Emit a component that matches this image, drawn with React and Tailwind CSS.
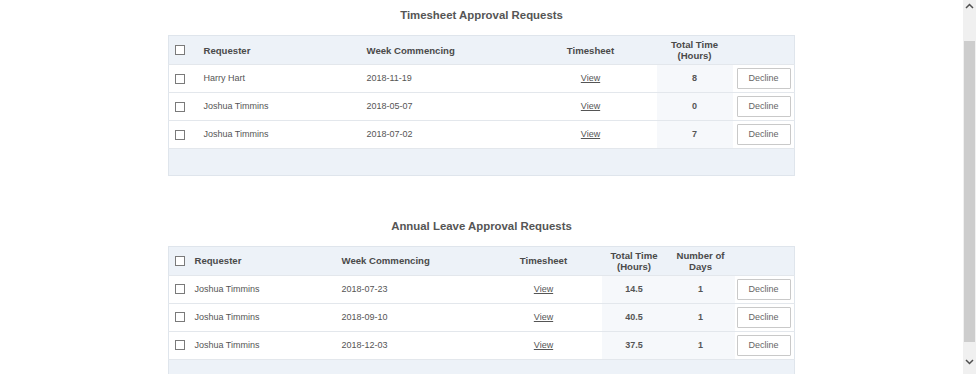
import React from "react";

const TIMESHEETS = [
  { name: "Harry Hart", week: "2018-11-19", hours: "8" },
  { name: "Joshua Timmins", week: "2018-05-07", hours: "0" },
  { name: "Joshua Timmins", week: "2018-07-02", hours: "7" },
];

const LEAVE = [
  { name: "Joshua Timmins", week: "2018-07-23", hours: "14.5", days: "1" },
  { name: "Joshua Timmins", week: "2018-09-10", hours: "40.5", days: "1" },
  { name: "Joshua Timmins", week: "2018-12-03", hours: "37.5", days: "1" },
];

const thCls = "font-bold text-[9.6px] leading-[11px] text-[#4a4a4a] h-[29px] align-middle";
const tdCls = "text-[9px] text-[#555] h-[28px] align-middle border-t border-[#e3e7ec]";

function Box() {
  return <span className="block w-[10px] h-[10px] border border-[#7a7a7a] bg-white" />;
}

function DeclineButton() {
  return (
    <button className="w-[54px] h-[21px] border border-[#c9c9c9] bg-white text-[9px] text-[#666] rounded-[1px]">
      Decline
    </button>
  );
}

function Title({ children }) {
  return (
    <h2 className="text-center font-bold text-[11.4px] text-[#555] leading-none">
      {children}
    </h2>
  );
}

function TimesheetTable() {
  return (
    <table className="table-fixed border-collapse w-[626px] border border-[#dfe5ec]">
      <colgroup>
        <col className="w-[27px]" />
        <col className="w-[163px]" />
        <col className="w-[166px]" />
        <col className="w-[132px]" />
        <col className="w-[76px]" />
        <col className="w-[62px]" />
      </colgroup>
      <thead className="bg-[#edf2f8]">
        <tr>
          <th className={`${thCls} pl-[6px]`}><Box /></th>
          <th className={`${thCls} text-left pl-[8px]`}>Requester</th>
          <th className={`${thCls} text-left pl-[8px]`}>Week Commencing</th>
          <th className={`${thCls} text-center`}>Timesheet</th>
          <th className={`${thCls} text-center`}>Total Time<br />(Hours)</th>
          <th className={thCls}></th>
        </tr>
      </thead>
      <tbody>
        {TIMESHEETS.map((r, i) => (
          <tr key={i} className="bg-white">
            <td className={`${tdCls} pl-[6px]`}><Box /></td>
            <td className={`${tdCls} pl-[8px]`}>{r.name}</td>
            <td className={`${tdCls} pl-[8px]`}>{r.week}</td>
            <td className={`${tdCls} text-center`}>
              <a className="underline text-[#555]">View</a>
            </td>
            <td className={`${tdCls} text-center font-bold bg-[#f6f8fb]`}>{r.hours}</td>
            <td className={`${tdCls} pl-[4px]`}><DeclineButton /></td>
          </tr>
        ))}
        <tr className="bg-[#edf2f8]">
          <td colSpan={6} className="h-[27px] border-t border-[#e3e7ec]"></td>
        </tr>
      </tbody>
    </table>
  );
}

function LeaveTable() {
  return (
    <table className="table-fixed border-collapse w-[626px] border border-[#dfe5ec]">
      <colgroup>
        <col className="w-[18px]" />
        <col className="w-[147px]" />
        <col className="w-[152px]" />
        <col className="w-[116px]" />
        <col className="w-[65px]" />
        <col className="w-[68px]" />
        <col className="w-[60px]" />
      </colgroup>
      <thead className="bg-[#edf2f8]">
        <tr>
          <th className={`${thCls} pl-[6px]`}><Box /></th>
          <th className={`${thCls} text-left pl-[8px]`}>Requester</th>
          <th className={`${thCls} text-left pl-[8px]`}>Week Commencing</th>
          <th className={`${thCls} text-center`}>Timesheet</th>
          <th className={`${thCls} text-center`}>Total Time<br />(Hours)</th>
          <th className={`${thCls} text-center`}>Number of<br />Days</th>
          <th className={thCls}></th>
        </tr>
      </thead>
      <tbody>
        {LEAVE.map((r, i) => (
          <tr key={i} className="bg-white">
            <td className={`${tdCls} pl-[6px]`}><Box /></td>
            <td className={`${tdCls} pl-[8px]`}>{r.name}</td>
            <td className={`${tdCls} pl-[8px]`}>{r.week}</td>
            <td className={`${tdCls} text-center`}>
              <a className="underline text-[#555]">View</a>
            </td>
            <td className={`${tdCls} text-center font-bold bg-[#f6f8fb]`}>{r.hours}</td>
            <td className={`${tdCls} text-center font-bold bg-[#f6f8fb]`}>{r.days}</td>
            <td className={`${tdCls} pl-[2px]`}><DeclineButton /></td>
          </tr>
        ))}
        <tr className="bg-[#edf2f8]">
          <td colSpan={7} className="h-[27px] border-t border-[#e3e7ec]"></td>
        </tr>
      </tbody>
    </table>
  );
}

function Scrollbar() {
  return (
    <div className="w-[13px] h-full bg-[#f0f0f0] flex flex-col items-center">
      <div className="h-[41px] w-full flex justify-center pt-[3px]">
        <svg width="9" height="6" viewBox="0 0 9 6">
          <path d="M1 5 L4.5 1.5 L8 5" fill="none" stroke="#505050" strokeWidth="1.5" />
        </svg>
      </div>
      <div className="w-[11px] h-[301px] bg-[#cdcdcd]" />
      <div className="flex-1 w-full flex justify-center items-end pb-[9px]">
        <svg width="9" height="6" viewBox="0 0 9 6">
          <path d="M1 1 L4.5 4.5 L8 1" fill="none" stroke="#505050" strokeWidth="1.5" />
        </svg>
      </div>
    </div>
  );
}

export default function App() {
  return (
    <div
      className="w-[976px] h-[374px] flex bg-white overflow-hidden"
      style={{ fontFamily: '"Liberation Sans", Arial, sans-serif' }}
    >
      <main className="flex-1 flex flex-col items-center pt-[10px]">
        <Title>Timesheet Approval Requests</Title>
        <div className="mt-[14px]">
          <TimesheetTable />
        </div>
        <div className="mt-[45px]">
          <Title>Annual Leave Approval Requests</Title>
        </div>
        <div className="mt-[13px]">
          <LeaveTable />
        </div>
      </main>
      <Scrollbar />
    </div>
  );
}
